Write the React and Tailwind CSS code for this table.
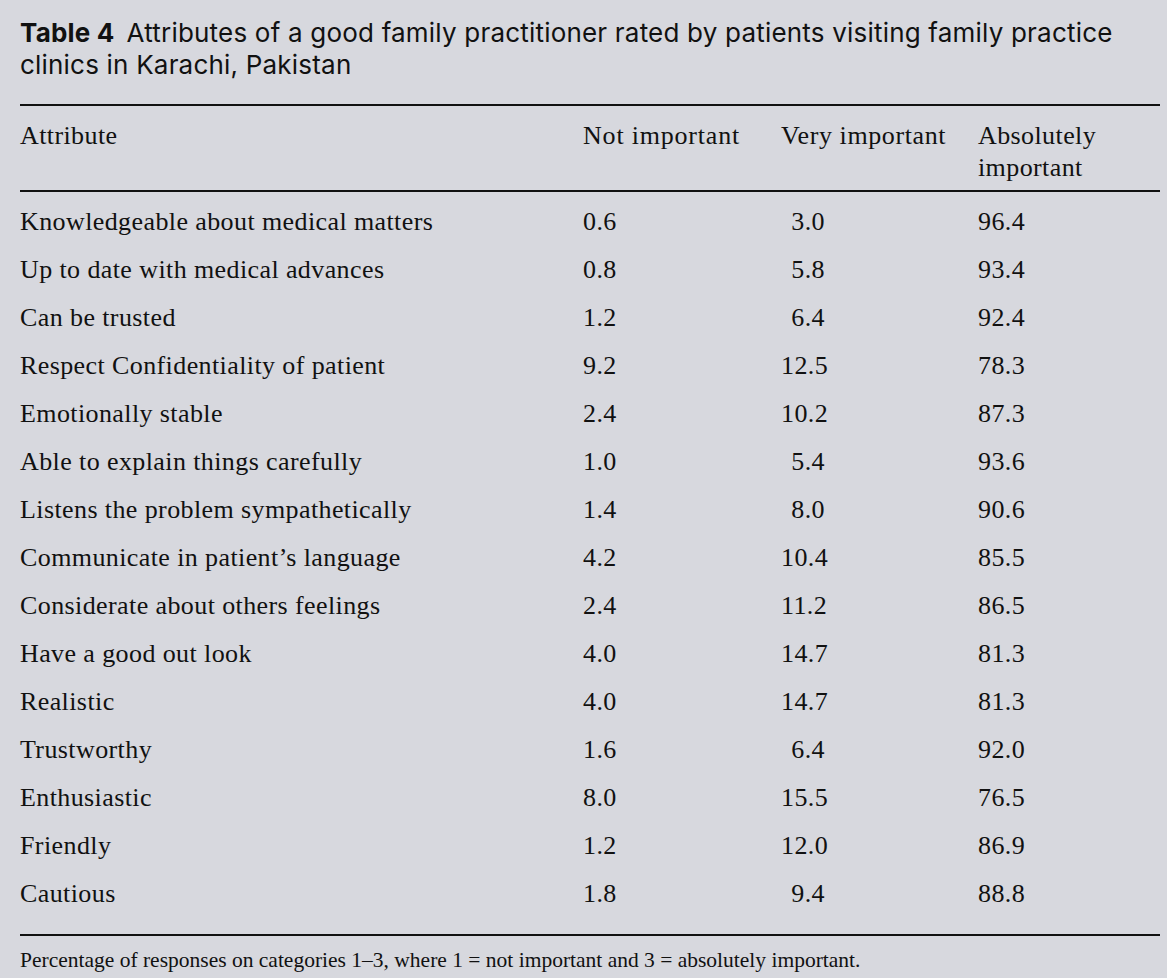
import React from "react";

const rows = [
  ["Knowledgeable about medical matters", "0.6", "3.0", "96.4"],
  ["Up to date with medical advances", "0.8", "5.8", "93.4"],
  ["Can be trusted", "1.2", "6.4", "92.4"],
  ["Respect Confidentiality of patient", "9.2", "12.5", "78.3"],
  ["Emotionally stable", "2.4", "10.2", "87.3"],
  ["Able to explain things carefully", "1.0", "5.4", "93.6"],
  ["Listens the problem sympathetically", "1.4", "8.0", "90.6"],
  ["Communicate in patient\u2019s language", "4.2", "10.4", "85.5"],
  ["Considerate about others feelings", "2.4", "11.2", "86.5"],
  ["Have a good out look", "4.0", "14.7", "81.3"],
  ["Realistic", "4.0", "14.7", "81.3"],
  ["Trustworthy", "1.6", "6.4", "92.0"],
  ["Enthusiastic", "8.0", "15.5", "76.5"],
  ["Friendly", "1.2", "12.0", "86.9"],
  ["Cautious", "1.8", "9.4", "88.8"],
];

export default function App() {
  return (
    <div className="w-[1167px] h-[978px] bg-[#d7d8de] text-[#111] overflow-hidden pl-[20px] pr-[7px]">
      <div className="pt-[17px] text-[26px] leading-[32px] font-['Inter',sans-serif] tracking-[0.2px] whitespace-nowrap">
        <div>
          <span className="font-bold">Table 4</span>
          <span className="ml-[12px]">Attributes of a good family practitioner rated by patients visiting family practice</span>
        </div>
        <div>clinics in Karachi, Pakistan</div>
      </div>
      <div className="mt-[23px] border-t-2 border-[#111] font-['Liberation_Serif',serif] text-[26px] tracking-[0.4px]">
        <div className="grid grid-cols-[563px_198px_197px_1fr] pt-[14px] pb-[6px] leading-[32px] border-b-2 border-[#111]">
          <div>Attribute</div>
          <div className="tracking-[0.8px]">Not important</div>
          <div className="tracking-[0.6px]">Very important</div>
          <div>Absolutely<br />important</div>
        </div>
        <div className="pt-[6px] pb-[16px] border-b-2 border-[#111]">
          {rows.map((r) => (
            <div key={r[0]} className="grid grid-cols-[563px_198px_197px_1fr] h-[48px] items-center leading-[30px]">
              <div>{r[0]}</div>
              <div>{r[1]}</div>
              <div><span className="inline-block w-[44px] text-right">{r[2]}</span></div>
              <div>{r[3]}</div>
            </div>
          ))}
        </div>
        <div className="pt-[12px] text-[21.5px] leading-[24px] tracking-normal">
          Percentage of responses on categories 1&ndash;3, where 1 = not important and 3 = absolutely important.
        </div>
      </div>
    </div>
  );
}
